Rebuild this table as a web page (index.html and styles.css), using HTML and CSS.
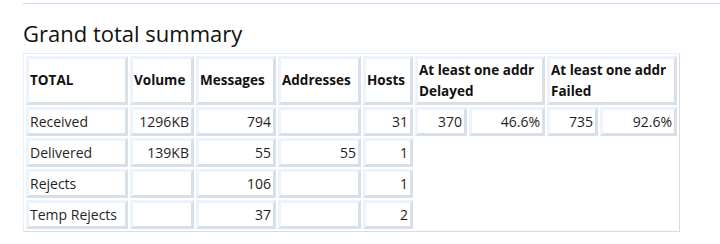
FILE: index.html
```html
<!DOCTYPE html>
<html>
<head>
<meta charset="utf-8">
<link rel="stylesheet" href="styles.css">
</head>
<body>
<div class="page">
  <div class="rule"></div>
  <h2 class="title">Grand total summary</h2>
  <table class="summary">
    <colgroup>
      <col class="c-total"><col class="c-vol"><col class="c-msg"><col class="c-addr"><col class="c-hosts">
      <col class="c-d1"><col class="c-d2"><col class="c-f1"><col class="c-f2">
    </colgroup>
    <tr class="head">
      <th>TOTAL</th><th>Volume</th><th>Messages</th><th>Addresses</th><th>Hosts</th>
      <th colspan="2">At least one addr<br>Delayed</th>
      <th colspan="2">At least one addr<br>Failed</th>
    </tr>
    <tr>
      <td class="lbl">Received</td><td>1296KB</td><td>794</td><td></td><td>31</td>
      <td>370</td><td>46.6%</td><td>735</td><td>92.6%</td>
    </tr>
    <tr>
      <td class="lbl">Delivered</td><td>139KB</td><td>55</td><td>55</td><td>1</td>
    </tr>
    <tr>
      <td class="lbl">Rejects</td><td></td><td>106</td><td></td><td>1</td>
    </tr>
    <tr>
      <td class="lbl">Temp Rejects</td><td></td><td>37</td><td></td><td>2</td>
    </tr>
  </table>
</div>
</body>
</html>
```

FILE: styles.css
```css
html, body {
  margin: 0;
  padding: 0;
  background: #fff;
}
body {
  font-family: "Open Sans", "Noto Sans", sans-serif;
  color: #1f1f1f;
}
.page {
  padding-left: 23px;
  padding-top: 3px;
}
.rule {
  height: 1px;
  background: #c9dbf2;
}
.title {
  margin: 14px 0 0 0;
  font-size: 22px;
  line-height: 30px;
  font-weight: 400;
  color: #111;
  height: 35px;
}
.summary {
  table-layout: fixed;
  border-collapse: separate;
  border-spacing: 2px;
  width: 657px;
  border: 1px solid;
  border-color: #e7effa #d7dbe2 #d7dbe2 #e7effa;
  font-size: 14px;
}
.summary th, .summary td {
  border: 3px solid;
  border-color: #eaf3fe #d9dfe7 #d9dfe7 #eaf3fe;
  padding: 0 2px 0 1px;
  box-sizing: border-box;
  white-space: nowrap;
  overflow: visible;
}
.summary th {
  height: 49px;
  text-align: left;
  font-weight: 700;
  font-size: 13.5px;
  line-height: 21px;
  color: #111;
}
.summary td {
  height: 29px;
  text-align: right;
  line-height: 20px;
}
.summary td.lbl {
  text-align: left;
}
.c-total { width: 102px; }
.c-vol { width: 64px; }
.c-msg { width: 80px; }
.c-addr { width: 83px; }
.c-hosts { width: 50px; }
.c-d1 { width: 52px; }
.c-d2 { width: 76px; }
.c-f1 { width: 51px; }
.c-f2 { width: 77px; }
```
